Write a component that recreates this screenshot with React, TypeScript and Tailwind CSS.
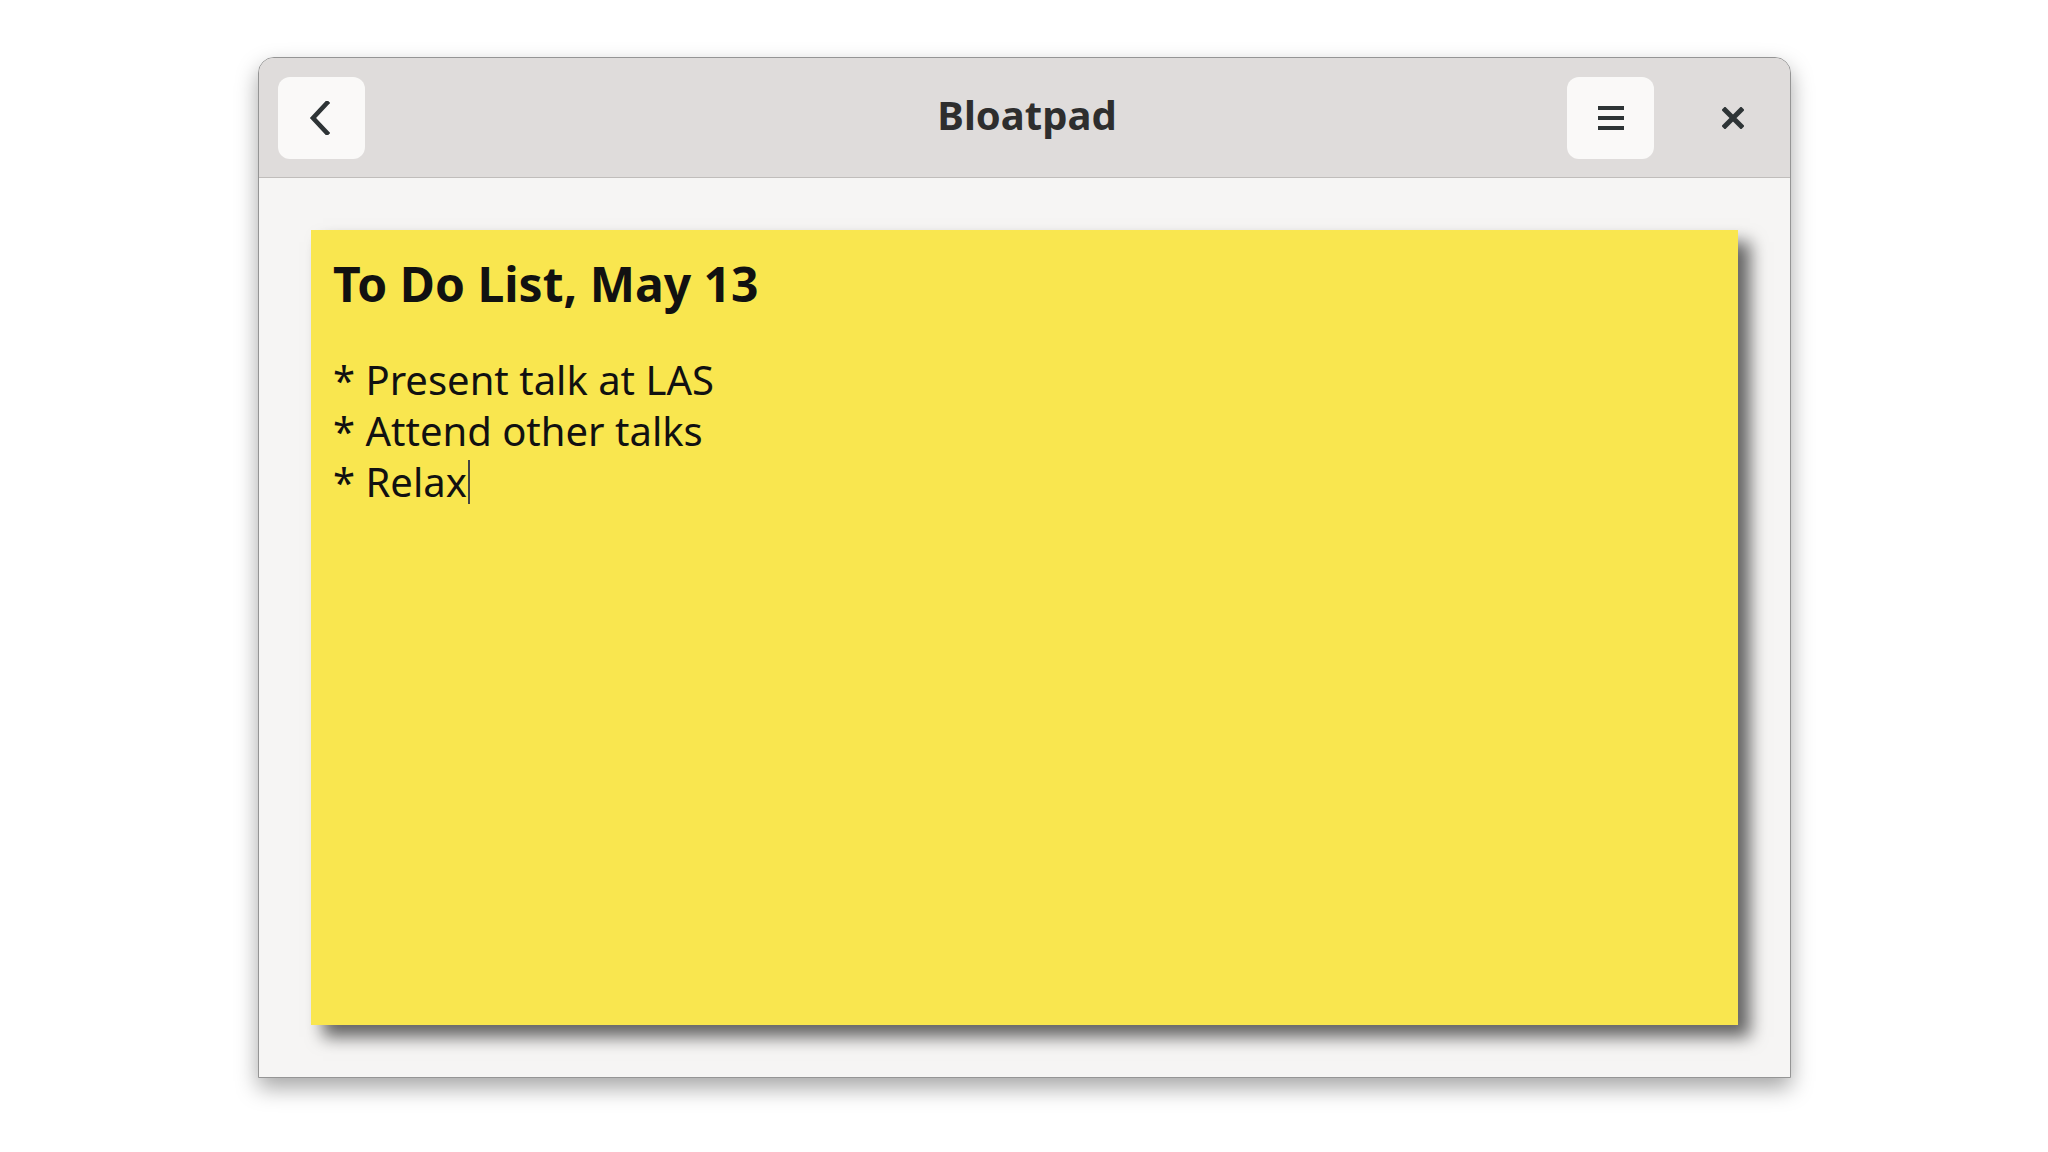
export default function App() {
  return (
    <div className="min-h-screen w-full bg-white pl-[258px] pt-[57px]" style={{ fontFamily: '"Noto Sans", "Open Sans", sans-serif' }}>
      <div className="flex h-[1021px] w-[1533px] flex-col overflow-hidden rounded-t-[16px] border border-[#959595] bg-[#f6f5f4] shadow-[0_10px_22px_rgba(0,0,0,0.35)]">
        {/* header bar */}
        <div className="grid h-[120px] shrink-0 grid-cols-[1fr_auto_1fr] items-center border-b border-[#c0bdbb] bg-[#dfdcdb] pl-[19px] pr-[14px]">
          <div className="flex items-center">
            <button className="flex h-[82px] w-[87px] items-center justify-center rounded-[12px] bg-[#faf9f8]">
              <svg width="22" height="34" viewBox="0 0 22 34" fill="none" className="-ml-[4px]">
                <path d="M18 2 L4 17 L18 32" stroke="#2e3436" strokeWidth="4.6" strokeLinecap="square" strokeLinejoin="miter" />
              </svg>
            </button>
          </div>
          <div className="pb-[5px] text-[40px] font-bold text-[#2e2e2e]">Bloatpad</div>
          <div className="flex items-center justify-end gap-[35px]">
            <button className="flex h-[82px] w-[87px] items-center justify-center rounded-[12px] bg-[#faf9f8]">
              <svg width="26" height="26" viewBox="0 0 26 26">
                <rect x="0" y="1" width="26" height="4" fill="#2e3436" />
                <rect x="0" y="11" width="26" height="4" fill="#2e3436" />
                <rect x="0" y="21" width="26" height="4" fill="#2e3436" />
              </svg>
            </button>
            <button className="flex h-[82px] w-[87px] items-center justify-center rounded-full">
              <svg width="22" height="22" viewBox="0 0 22 22">
                <path d="M3 3 L19 19 M19 3 L3 19" stroke="#2e3436" strokeWidth="5" strokeLinecap="square" />
              </svg>
            </button>
          </div>
        </div>

        {/* content */}
        <div className="flex flex-1 p-[52px]">
          <div className="flex-1 bg-[#f9e64f] pl-[22px] pt-6 text-[#111] shadow-[12px_12px_16px_rgba(0,0,0,0.6)]">
            <h1 className="text-[48px] font-bold leading-[60px]">To Do List, May 13</h1>
            <div className="mt-10 text-[40px] leading-[51px]">
              <div>* Present talk at LAS</div>
              <div>* Attend other talks</div>
              <div className="flex items-center">
                <span>* Relax</span>
                <span className="ml-[1px] inline-block h-[44px] w-[2px] bg-[#444]" />
              </div>
            </div>
          </div>
        </div>
      </div>
    </div>
  )
}
